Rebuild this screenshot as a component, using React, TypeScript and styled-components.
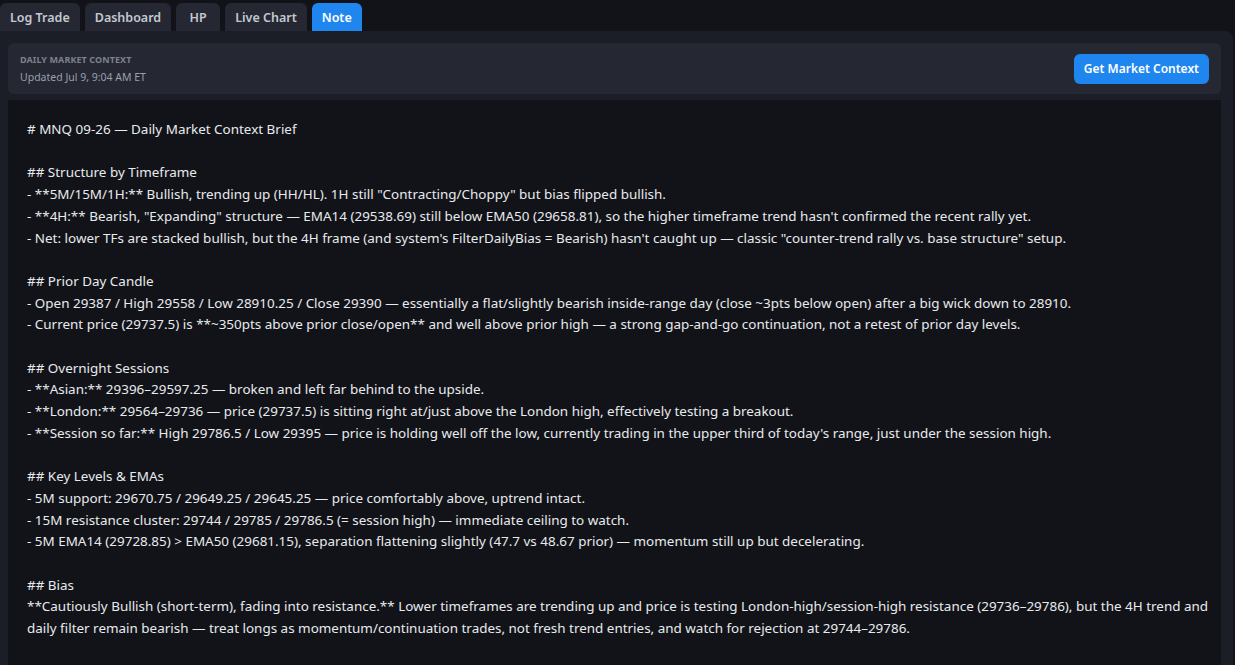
import React from 'react'
import styled, { createGlobalStyle } from 'styled-components'
import { useState } from 'react'

const GlobalStyle = createGlobalStyle`
  html, body {
    margin: 0;
    padding: 0;
    background: #111318;
    height: 100%;
    overflow: hidden;
  }
  body {
    font-family: "Noto Sans", "Open Sans", sans-serif;
  }
  #root {
    height: 100%;
  }
`

const Page = styled.div`
  display: flex;
  flex-direction: column;
  height: 100vh;
  background: #111318;
`

const TabBar = styled.nav`
  display: flex;
  gap: 5px;
  padding-top: 3px;
  height: 28px;
`

const Tab = styled.button<{ $active?: boolean }>`
  border: none;
  border-radius: 6px 6px 0 0;
  padding: 0 10px;
  min-width: 44px;
  height: 28px;
  font-family: "Noto Sans", "Open Sans", sans-serif;
  font-size: 12.5px;
  font-weight: 600;
  cursor: pointer;
  background: ${p => (p.$active ? '#1f86f0' : '#252833')};
  color: ${p => (p.$active ? '#ffffff' : '#c4c8d0')};
`

const Panel = styled.section`
  flex: 1;
  display: flex;
  flex-direction: column;
  gap: 6px;
  margin-right: 2px;
  padding: 12px 12px 0 8px;
  background: #1b1e26;
  border-radius: 0 8px 0 0;
  min-height: 0;
`

const Header = styled.header`
  display: flex;
  align-items: center;
  justify-content: space-between;
  height: 51px;
  padding: 0 12px;
  box-sizing: border-box;
  background: #252833;
  border-radius: 6px;
`

const HeaderText = styled.div`
  display: flex;
  flex-direction: column;
  gap: 4px;
`

const Eyebrow = styled.div`
  font-size: 9px;
  font-weight: 700;
  letter-spacing: 0.1px;
  text-transform: uppercase;
  color: #7c818c;
`

const Updated = styled.div`
  font-size: 10.5px;
  color: #9a9fa9;
`

const PrimaryButton = styled.button`
  height: 30px;
  padding: 0 10px;
  border: none;
  border-radius: 6px;
  background: #1f86f0;
  color: #ffffff;
  font-family: "Noto Sans", "Open Sans", sans-serif;
  font-size: 12px;
  font-weight: 600;
  cursor: pointer;
`

const NoteBody = styled.div`
  flex: 1;
  padding: 19px 8px 19px 19px;
  background: #111318;
  color: #e8eaed;
  font-size: 13.45px;
  line-height: 21.7px;
  white-space: pre-wrap;
  overflow: hidden;
`

const note = `# MNQ 09-26 — Daily Market Context Brief

## Structure by Timeframe
- **5M/15M/1H:** Bullish, trending up (HH/HL). 1H still "Contracting/Choppy" but bias flipped bullish.
- **4H:** Bearish, "Expanding" structure — EMA14 (29538.69) still below EMA50 (29658.81), so the higher timeframe trend hasn't confirmed the recent rally yet.
- Net: lower TFs are stacked bullish, but the 4H frame (and system's FilterDailyBias = Bearish) hasn't caught up — classic "counter-trend rally vs. base structure" setup.

## Prior Day Candle
- Open 29387 / High 29558 / Low 28910.25 / Close 29390 — essentially a flat/slightly bearish inside-range day (close ~3pts below open) after a big wick down to 28910.
- Current price (29737.5) is **~350pts above prior close/open** and well above prior high — a strong gap-and-go continuation, not a retest of prior day levels.

## Overnight Sessions
- **Asian:** 29396–29597.25 — broken and left far behind to the upside.
- **London:** 29564–29736 — price (29737.5) is sitting right at/just above the London high, effectively testing a breakout.
- **Session so far:** High 29786.5 / Low 29395 — price is holding well off the low, currently trading in the upper third of today's range, just under the session high.

## Key Levels & EMAs
- 5M support: 29670.75 / 29649.25 / 29645.25 — price comfortably above, uptrend intact.
- 15M resistance cluster: 29744 / 29785 / 29786.5 (= session high) — immediate ceiling to watch.
- 5M EMA14 (29728.85) > EMA50 (29681.15), separation flattening slightly (47.7 vs 48.67 prior) — momentum still up but decelerating.

## Bias
**Cautiously Bullish (short-term), fading into resistance.** Lower timeframes are trending up and price is testing London-high/session-high resistance (29736–29786), but the 4H trend and daily filter remain bearish — treat longs as momentum/continuation trades, not fresh trend entries, and watch for rejection at 29744–29786.`

const tabs = ['Log Trade', 'Dashboard', 'HP', 'Live Chart', 'Note']

const App = () => {
  const [active, setActive] = useState<string>('Note')

  return (
    <Page>
      <GlobalStyle />
      <TabBar>
        {tabs.map(t => (
          <Tab key={t} $active={t === active} onClick={() => setActive(t)}>
            {t}
          </Tab>
        ))}
      </TabBar>
      <Panel>
        <Header>
          <HeaderText>
            <Eyebrow>Daily Market Context</Eyebrow>
            <Updated>Updated Jul 9, 9:04 AM ET</Updated>
          </HeaderText>
          <PrimaryButton>Get Market Context</PrimaryButton>
        </Header>
        <NoteBody>{note}</NoteBody>
      </Panel>
    </Page>
  )
}

export default App
